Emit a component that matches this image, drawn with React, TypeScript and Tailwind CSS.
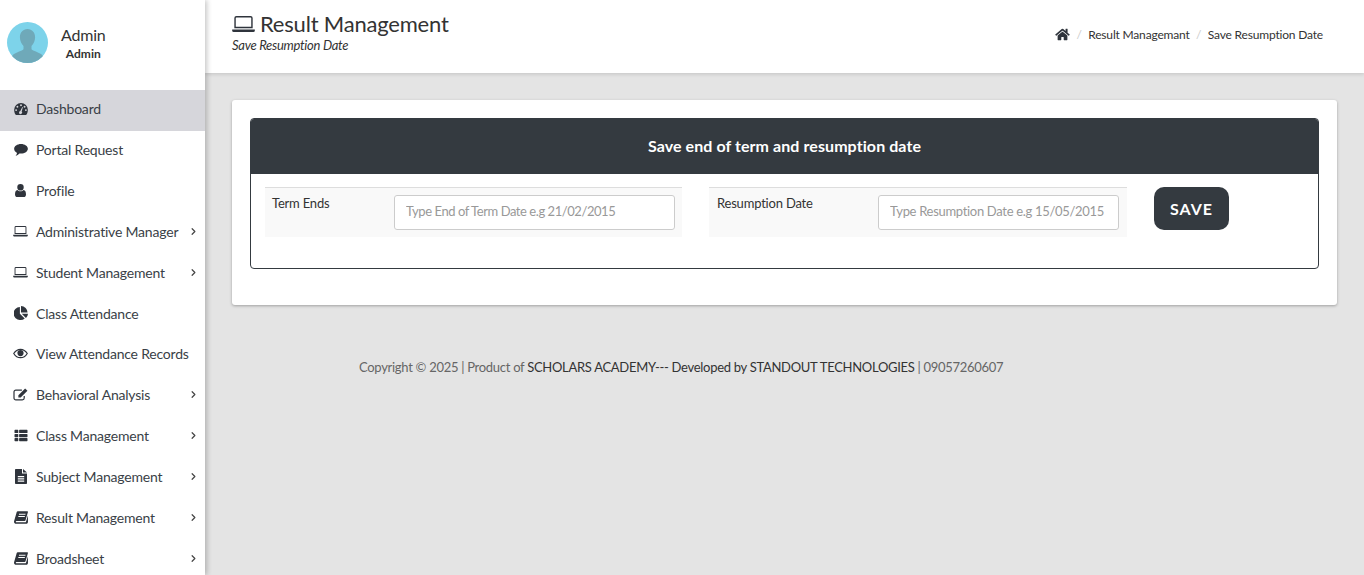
import React from "react";
import { FaThList, FaHome } from "react-icons/fa";
import { LuChevronRight } from "react-icons/lu";

const Laptop = ({ className }: { className?: string }) => (
  <svg viewBox="0 0 24 18" className={className} fill="currentColor">
    <path d="M4.500 0h15A2.200 2.200 0 0 1 21.700 2.200V13H2.300V2.200A2.200 2.200 0 0 1 4.500 0Zm0 1.500a.7.7 0 0 0-.7.7v9.300h16.400V2.200a.7.7 0 0 0-.7-.7Z" />
    <path d="M0 14.200h24v1.300A1.600 1.600 0 0 1 22.400 17H1.600A1.600 1.600 0 0 1 0 15.500Z" />
  </svg>
);

const Dash = () => (
  <svg viewBox="0 0 16 14" className="h-[12px] w-[14px]" fill="currentColor">
    <path fillRule="evenodd" d="M8 0a8 8 0 0 1 8 8c0 2.200-.5 3.900-1.500 5.500a1 1 0 0 1-.8.500H2.300a1 1 0 0 1-.8-.5C.5 11.900 0 10.200 0 8a8 8 0 0 1 8-8ZM8 1.500a1.100 1.100 0 1 0 0 2.200 1.100 1.100 0 0 0 0-2.200ZM3.800 3.300a1.100 1.100 0 1 0 0 2.200 1.100 1.100 0 0 0 0-2.200ZM12.200 3.300a1.100 1.100 0 1 0 0 2.200 1.100 1.100 0 0 0 0-2.200ZM2.300 7.200a1.100 1.100 0 1 0 0 2.200 1.100 1.100 0 0 0 0-2.200ZM13.700 7.200a1.100 1.100 0 1 0 0 2.200 1.100 1.100 0 0 0 0-2.200ZM9.500 4.800 7.200 9.400a1.800 1.800 0 1 0 1.600.5l1.400-4.900Z" />
  </svg>
);
const Comment = () => (
  <svg viewBox="0 0 16 14" className="h-[12px] w-[14px]" fill="currentColor">
    <path d="M8 0c4.400 0 8 2.500 8 5.600s-3.600 5.600-8 5.600c-.6 0-1.200 0-1.800-.1C5 12.300 3.300 13.500 1.700 13.800c.8-.9 1.500-2 1.700-3.400C1.300 9.400 0 7.600 0 5.600 0 2.500 3.600 0 8 0Z" />
  </svg>
);
const UserI = () => (
  <svg viewBox="0 0 11 13" className="h-[13px] w-[11px]" fill="currentColor">
    <path d="M5.500 0a3.200 3.200 0 0 1 3.200 3.300A3.200 3.200 0 0 1 5.500 6.600a3.200 3.200 0 0 1-3.200-3.300A3.200 3.200 0 0 1 5.500 0Z" />
    <path d="M2.400 6c.8.800 1.900 1.300 3.100 1.300S7.800 6.800 8.600 6C10.200 6.200 11 7.800 11 10.400c0 1.600-1 2.600-2.300 2.600H2.300C1 13 0 12 0 10.400 0 7.800.8 6.200 2.400 6Z" />
  </svg>
);
const Pie = () => (
  <svg viewBox="0 0 15 15" className="h-[14px] w-[14px]" fill="currentColor">
    <path d="M6.300 1v7.200l5.200 5.100A6.900 6.900 0 0 1 6.800 15 6.800 6.800 0 0 1 6.300 1Z" />
    <path d="M7.500 0a7 7 0 0 1 7 7H7.500Z" />
    <path d="M8.300 8.300H15a7 7 0 0 1-2.200 4.500Z" />
  </svg>
);
const Eye = () => (
  <svg viewBox="0 0 16 11" className="h-[11px] w-[15px]" fill="none" stroke="currentColor">
    <path strokeWidth="1.300" d="M.8 5.500C2.600 2.500 5 1 8 1s5.400 1.500 7.200 4.500C13.400 8.500 11 10 8 10S2.600 8.500.8 5.500Z" />
    <circle cx="8" cy="5" r="3.300" fill="currentColor" stroke="none" />
  </svg>
);
const Edit = () => (
  <svg viewBox="0 0 16 14" className="h-[13px] w-[15px]" fill="none">
    <path stroke="currentColor" strokeWidth="1.300" d="M12 8.500v2.300a2 2 0 0 1-2 2H3a2 2 0 0 1-2-2V4.200a2 2 0 0 1 2-2h6.500" />
    <path fill="currentColor" d="M13 .6 15.500 3 8.200 10.300H5.700V7.800Z" />
  </svg>
);
const FileI = () => (
  <svg viewBox="0 0 12 15" className="h-[15px] w-[12px]" fill="currentColor">
    <path fillRule="evenodd" d="M.8 0H7v4.500h5v9.700a.8.800 0 0 1-.8.800H.8a.8.800 0 0 1-.8-.8V.8A.8.800 0 0 1 .8 0ZM2.800 7v1.200h6.400V7ZM2.800 9.300v1.200h6.400V9.300ZM2.800 11.600v1.200h6.400v-1.200Z" />
    <path d="M8 0l4 3.600H8Z" />
  </svg>
);
const Book = () => (
  <svg viewBox="0 0 15 14" className="h-[13px] w-[14px]" fill="currentColor">
    <path fillRule="evenodd" d="M4 .2h10.300c.5 0 .8.400.7.900L12.400 10c-.1.500-.5.800-1 .8H2.600c-.4 0-.7.300-.7.700s.3.700.7.700h9.600c.3 0 .5-.2.600-.4L15 4.600V12c-.2.900-1 1.800-2 1.800H2.400C1 13.800 0 12.900 0 11.500c0-.3 0-.6.100-.8L2.900 1C3 .5 3.500.2 4 .2ZM5.300 3v1.100h6.900l.3-1.100ZM4.600 5.400v1.100h6.900l.3-1.100Z" />
  </svg>
);

const items = [
  { label: "Dashboard", icon: <Dash />, active: true },
  { label: "Portal Request", icon: <Comment /> },
  { label: "Profile", icon: <UserI /> },
  { label: "Administrative Manager", icon: <Laptop className="h-[11px] w-[15px]" />, arrow: true },
  { label: "Student Management", icon: <Laptop className="h-[11px] w-[15px]" />, arrow: true },
  { label: "Class Attendance", icon: <Pie /> },
  { label: "View Attendance Records", icon: <Eye /> },
  { label: "Behavioral Analysis", icon: <Edit />, arrow: true },
  { label: "Class Management", icon: <FaThList className="h-[13px] w-[14px]" />, arrow: true },
  { label: "Subject Management", icon: <FileI />, arrow: true },
  { label: "Result Management", icon: <Book />, arrow: true },
  { label: "Broadsheet", icon: <Book />, arrow: true },
];

const Avatar = () => (
  <svg viewBox="0 0 41 41" className="h-[41px] w-[41px] shrink-0">
    <defs>
      <clipPath id="av"><circle cx="20.500" cy="20.500" r="20.500" /></clipPath>
    </defs>
    <g clipPath="url(#av)">
      <rect width="41" height="41" fill="#7dd3ea" />
      <path d="M20.500 7c4.600 0 7.600 3.600 7.600 8.300 0 3.600-1.600 6.800-3.600 8.600v3.200c0 1.300 5 2.600 9 4.600 2.500 1.300 3.500 3.500 3.500 9.300H4c0-5.800 1-8 3.500-9.300 4-2 9-3.300 9-4.600v-3.200c-2-1.800-3.600-5-3.600-8.600C12.900 10.600 15.900 7 20.500 7Z" fill="#6fa9b9" />
    </g>
  </svg>
);

function Field({ label, placeholder, className, labelClass, inputClass }: { label: string; placeholder: string; className: string; labelClass: string; inputClass: string }) {
  return (
    <div className={`flex h-[50px] border-t border-[#dddddd] bg-[#f9f9f9] ${className}`}>
      <div className={`pt-[6px] text-[13px] leading-[18px] tracking-[-0.2px] text-[#333] ${labelClass}`}>{label}</div>
      <div className="pt-[7px]">
        <input
          placeholder={placeholder}
          className={`h-[35px] rounded-[3px] border border-[#cccccc] bg-white px-[11px] pb-[3px] text-[13px] outline-none placeholder:text-[#999] ${inputClass}`}
        />
      </div>
    </div>
  );
}

export default function App() {
  return (
    <div className="flex h-[575px] w-[1364px] overflow-hidden bg-[#e4e4e4] text-[#333] [font-family:Lato,'Open_Sans',sans-serif]">
      <aside className="relative z-20 w-[205px] shrink-0 bg-white shadow-[2px_0_5px_rgba(0,0,0,0.22)]">
        <div className="flex h-[90px] items-start pl-[7px] pt-[22px]">
          <Avatar />
          <div className="ml-[13px] flex flex-col items-center pt-[3px]">
            <span className="text-[16px] leading-[20px] tracking-[-0.2px] text-[#333]">Admin</span>
            <span className="text-[12px] font-bold leading-[18px] text-[#333]">Admin</span>
          </div>
        </div>
        <nav>
          {items.map((it) => (
            <div
              key={it.label}
              className={`flex h-[40.850px] items-center pb-[3px] text-[14px] tracking-[-0.2px] text-[#3a3f47] ${it.active ? "bg-[#d6d6db]" : ""}`}
            >
              <span className="flex w-[36px] shrink-0 items-center pl-[13px] text-[#2f343c]">
                <span className="flex w-[15px] justify-center">{it.icon}</span>
              </span>
              <span className="flex-1 whitespace-nowrap">{it.label}</span>
              {it.arrow && <LuChevronRight strokeWidth={2.6} className="mr-[6px] h-[11px] w-[11px] text-[#444]" />}
            </div>
          ))}
        </nav>
      </aside>
      <main className="flex min-w-0 flex-1 flex-col">
        <header className="relative z-10 flex h-[73px] items-start justify-between bg-white pl-[27px] pr-[41px] shadow-[0_1px_4px_rgba(0,0,0,0.15)]">
          <div className="pt-[11px]">
            <div className="flex items-center text-[22px] leading-[26px] tracking-[-0.2px] text-[#333]">
              <Laptop className="mr-[5px] h-[17px] w-[23px] text-[#2f343c]" />
              <span>Result Management</span>
            </div>
            <div className="text-[13px] italic leading-[17px] tracking-[-0.28px] text-[#333]">Save Resumption Date</div>
          </div>
          <div className="flex items-center pt-[26px] text-[12px] leading-[17px] tracking-[-0.18px] text-[#333]">
            <FaHome className="h-[13px] w-[15px] text-[#2f343c]" />
            <span className="mx-[6.500px] text-[#ccc]">/</span>
            <span>Result Managemant</span>
            <span className="mx-[6.500px] text-[#ccc]">/</span>
            <span>Save Resumption Date</span>
          </div>
        </header>
        <div className="px-[27px] pt-[27px]">
          <section className="h-[205px] rounded-[3px] bg-white p-[18px] shadow-[0_1px_3px_rgba(0,0,0,0.3)]">
            <div className="h-[151px] overflow-hidden rounded-[4px] border border-[#343a40]">
              <div className="flex h-[55px] items-center justify-center bg-[#343a40] pb-[2px] text-[16px] font-bold tracking-[0.08px] text-white">
                Save end of term and resumption date
              </div>
              <div className="flex items-start pl-[14px] pt-[13px]">
                <Field
                  label="Term Ends"
                  placeholder="Type End of Term Date e.g 21/02/2015"
                  className="w-[417px] pl-[7px]"
                  labelClass="w-[122px]"
                  inputClass="w-[281px] tracking-[-0.44px]"
                />
                <Field
                  label="Resumption Date"
                  placeholder="Type Resumption Date e.g 15/05/2015"
                  className="ml-[27px] w-[418px] pl-[8px]"
                  labelClass="w-[161px]"
                  inputClass="w-[241px] tracking-[-0.31px]"
                />
                <button className="ml-[27px] h-[43px] w-[75px] rounded-[10px] bg-[#343a40] text-[16px] font-bold tracking-[1px] text-white">
                  SAVE
                </button>
              </div>
            </div>
          </section>
          <footer className="pl-[127px] pt-[54px] text-[13px] leading-[17px] tracking-[-0.29px] text-[#666]">
            Copyright © 2025 | Product of <span className="text-[#333]">SCHOLARS ACADEMY--- Developed by STANDOUT TECHNOLOGIES</span> | 09057260607
          </footer>
        </div>
      </main>
    </div>
  );
}
